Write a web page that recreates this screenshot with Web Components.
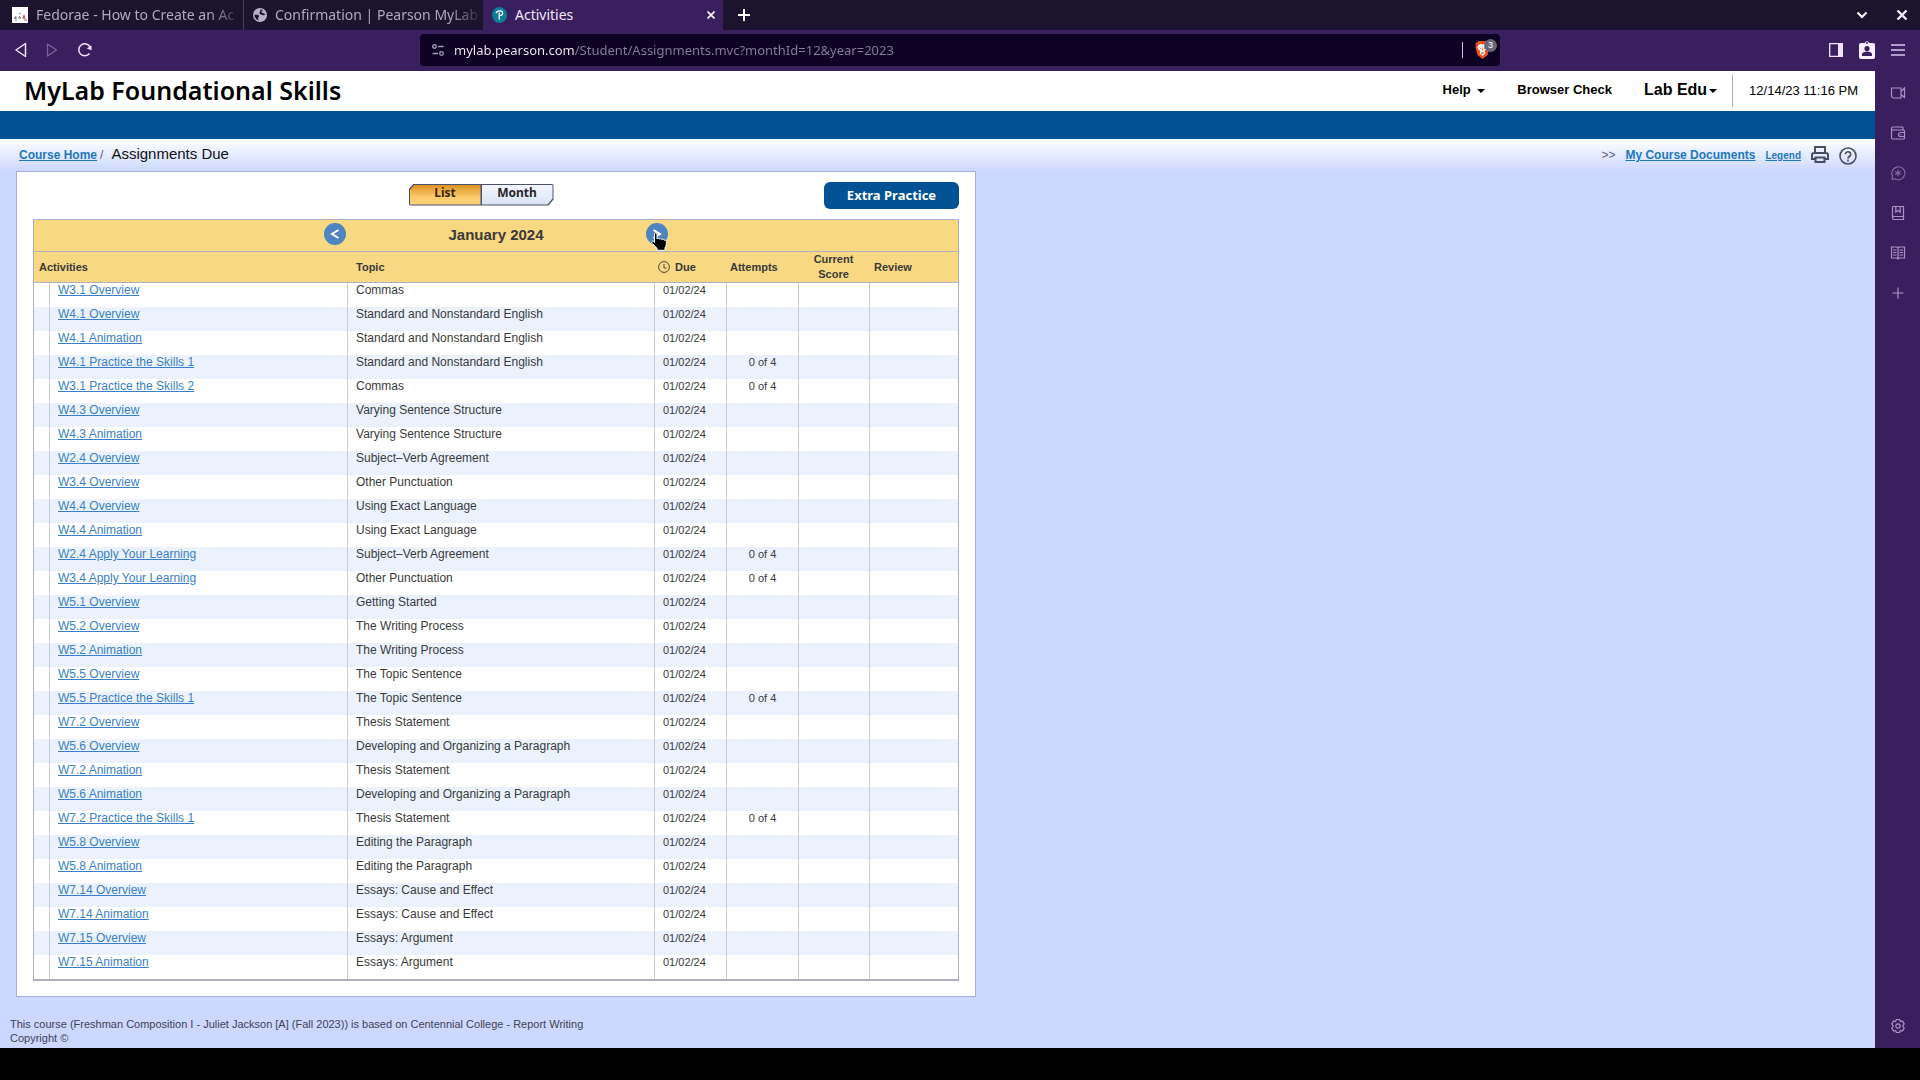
<!DOCTYPE html>
<html lang="en">
<head>
<meta charset="utf-8">
<title>Activities</title>
<style>
    :root {
        --chrome-dark: #1c142e;
        --chrome: #3a1f5e;
        --chrome-deep: #0e0224;
        --page: #ccd8ff;
        --brand: #005295;
        --gold: #f8d883;
        --line: #aeb0c0;
        --ui: "Noto Sans", "Open Sans", sans-serif;
        --text: "Liberation Sans", Arial, sans-serif;
    }
    body {
        margin: 0;
        background: #000;
        font-family: var(--text);
    }
</style>
</head>
<body>
<browser-window></browser-window>

<script>
class BrowserWindow extends HTMLElement {
    constructor() {
        super();
        this.attachShadow({ mode: 'open' });
    }

    connectedCallback() {
        this.shadowRoot.innerHTML = `
            <style>
                :host {
                    display: flex;
                    flex-direction: column;
                    box-sizing: border-box;
                    min-height: 100vh;
                    padding-bottom: 32px;
                }
                .body {
                    flex: 1;
                    display: flex;
                }
                main {
                    flex: 1;
                    min-width: 0;
                    background: var(--page);
                }
            </style>
            <tab-strip></tab-strip>
            <browser-toolbar></browser-toolbar>
            <div class="body">
                <main>
                    <lab-header></lab-header>
                    <crumb-bar>Assignments Due</crumb-bar>
                    <assignment-panel month="January 2024"></assignment-panel>
                    <course-footer>
                        <div>This course (Freshman Composition I - Juliet Jackson [A] (Fall 2023)) is based on Centennial College - Report Writing</div>
                        <div>Copyright ©</div>
                    </course-footer>
                </main>
                <side-rail></side-rail>
            </div>
        `;
    }
}

class TabStrip extends HTMLElement {
    constructor() {
        super();
        this.attachShadow({ mode: 'open' });
    }

    connectedCallback() {
        this.shadowRoot.innerHTML = `
            <style>
                :host {
                    display: flex;
                    height: 30px;
                    background: var(--chrome-dark);
                    font-family: var(--ui);
                }
                svg { display: block; flex: none; }
                button {
                    border: 0;
                    padding: 0;
                    background: none;
                    color: #fff;
                    font: inherit;
                }
                .tab {
                    display: flex;
                    align-items: center;
                    width: 240px;
                    box-sizing: border-box;
                    color: #b0a8be;
                    font-size: 14px;
                }
                .tab .label {
                    display: flex;
                    align-items: center;
                    gap: 8px;
                    flex: 1;
                    min-width: 0;
                    height: 30px;
                    padding-left: 9px;
                    color: inherit;
                }
                .tab span {
                    flex: 1;
                    padding-bottom: 2px;
                    white-space: nowrap;
                    text-align: left;
                }
                .fade span {
                    -webkit-mask-image: linear-gradient(to right, #000 84%, transparent);
                    mask-image: linear-gradient(to right, #000 84%, transparent);
                }
                .first { width: 243px; }
                .first .label { padding-left: 12px; }
                .second { border-left: 1px solid #47405a; }
                .active {
                    background: var(--chrome);
                    color: #f0eaf8;
                }
                .close { padding: 8px; }
                .new { width: 42px; display: grid; place-items: center; }
                .window {
                    display: flex;
                    align-items: center;
                    gap: 28px;
                    margin-left: auto;
                    padding-right: 12px;
                }
            </style>
            <div class="tab fade first">
                <button class="label">
                    <svg width="16" height="16" viewBox="0 0 16 16">
                        <path fill="#fff" d="M0 0h16v16H0z"/>
                        <path fill="none" stroke="#777" d="M2 11h3M3 12l1-3M6 11h3M7 9l2 2"/>
                        <path fill="none" stroke="#5a7dc0" d="M7 6l2 1M3 13h2"/>
                        <path fill="none" stroke="#cc4b4b" d="M11 12l1-4 1 4M12 13h3"/>
                    </svg>
                    <span>Fedorae - How to Create an Ac</span>
                </button>
            </div>
            <div class="tab fade second">
                <button class="label">
                    <svg width="14" height="14" viewBox="0 0 14 14">
                        <circle cx="7" cy="7" r="7" fill="#b9b1c8"/>
                        <path fill="#1c142e" d="M1.500 6.500c2 .6 4-.5 4.500 1.500.3 1.400-1.200 1.200-1 2.600.1 1 .8 1 .5 1.700C3 11.700 1.400 9.500 1.500 6.500zM7.500 1.600l2.400.5c-.2 1-.9.8-1.400 1.500-.4.600.5 1.200 1.400 1.400 1 .2 1.100 1 2.200 1-.1 1.400-1.600 1.300-2.400 1C8.800 6.600 7 6.800 6.500 5.600 6 4.300 7.600 3.500 7.500 1.600z"/>
                    </svg>
                    <span>Confirmation | Pearson MyLab</span>
                </button>
            </div>
            <div class="tab active">
                <button class="label">
                    <svg width="15" height="16" viewBox="0 0 15 16">
                        <ellipse cx="7.500" cy="8" rx="7.500" ry="8" fill="#0b7d96"/>
                        <path fill="none" stroke="#fff" stroke-width="1.300" stroke-linecap="round" d="M4.200 5.700C5 4 7 3.600 8.800 4c2.600.6 2.300 4.300-.6 4.600M7.200 6v6"/>
                    </svg>
                    <span>Activities</span>
                </button>
                <button class="close" aria-label="Close tab">
                    <svg width="8" height="8" viewBox="0 0 8 8"><path stroke="#fff" stroke-width="1.600" d="M.5.5l7 7M7.500.5l-7 7"/></svg>
                </button>
            </div>
            <button class="new" aria-label="New tab">
                <svg width="12" height="12" viewBox="0 0 12 12"><path stroke="#fff" stroke-width="2" d="M6 0v12M0 6h12"/></svg>
            </button>
            <div class="window">
                <button aria-label="Search tabs">
                    <svg width="12" height="8" viewBox="0 0 12 8"><path fill="none" stroke="#fff" stroke-width="2" d="M1.500 1.500L6 6l4.500-4.500"/></svg>
                </button>
                <button aria-label="Close window">
                    <svg width="12" height="12" viewBox="0 0 12 12"><path stroke="#f4eefc" stroke-width="2.400" d="M1.500 1.500l9 9M10.500 1.500l-9 9"/></svg>
                </button>
            </div>
        `;
    }
}

class BrowserToolbar extends HTMLElement {
    constructor() {
        super();
        this.attachShadow({ mode: 'open' });
    }

    connectedCallback() {
        this.shadowRoot.innerHTML = `
            <style>
                :host {
                    display: grid;
                    grid-template-columns: 1fr 1080px 1fr;
                    align-items: center;
                    height: 40px;
                    padding-bottom: 1px;
                    background: var(--chrome);
                    font-family: var(--ui);
                }
                svg { display: block; flex: none; }
                button {
                    border: 0;
                    padding: 0;
                    background: none;
                }
                .nav {
                    display: flex;
                    align-items: center;
                    gap: 19px;
                    padding-left: 15px;
                }
                .address {
                    display: flex;
                    align-items: center;
                    gap: 10px;
                    height: 32px;
                    box-sizing: border-box;
                    padding: 0 4px 0 12px;
                    border-radius: 4px;
                    background: var(--chrome-deep);
                }
                /* host part bright, path part dimmed */
                input {
                    flex: 1;
                    min-width: 0;
                    border: 0;
                    padding: 0;
                    outline: 0;
                    font: 13px var(--ui);
                    color: transparent;
                    background: linear-gradient(to right, #f4f0fa 121px, #877e99 121px);
                    -webkit-background-clip: text;
                    background-clip: text;
                }
                .shields {
                    display: flex;
                    position: relative;
                    padding: 0 6px 0 12px;
                    border-left: 1px solid #cbc3d8;
                    height: 16px;
                    align-items: center;
                }
                .count {
                    position: absolute;
                    right: -1px;
                    top: -3px;
                    width: 13px;
                    height: 13px;
                    border-radius: 50%;
                    background: #696678;
                    color: #fff;
                    font-size: 9px;
                    line-height: 13px;
                    text-align: center;
                }
                .tools {
                    display: flex;
                    align-items: center;
                    justify-content: flex-end;
                    gap: 16px;
                    padding-right: 15px;
                }
            </style>
            <div class="nav">
                <button aria-label="Back">
                    <svg width="12" height="16" viewBox="0 0 12 16"><path fill="none" stroke="#f1e4ff" stroke-width="1.500" stroke-linejoin="round" d="M10.500 1.500v13L1 8z"/></svg>
                </button>
                <button aria-label="Forward" disabled>
                    <svg width="12" height="16" viewBox="0 0 12 16"><path fill="none" stroke="#79609b" stroke-width="1.300" stroke-linejoin="round" d="M1.500 2v12L10.500 8z"/></svg>
                </button>
                <button aria-label="Reload">
                    <svg width="16" height="16" viewBox="0 0 16 16">
                        <path fill="none" stroke="#f1e4ff" stroke-width="1.500" d="M12.500 11.500A6 6 0 1 1 13 4.800"/>
                        <path fill="#f1e4ff" d="M9.800 6.500l4.700-3.200v5z"/>
                    </svg>
                </button>
            </div>
            <div class="address">
                <svg width="12" height="12" viewBox="0 0 12 12"><path fill="none" stroke="#a79db8" stroke-width="1.300" d="M6 2.500h5.500M.5 9.500H6"/><circle cx="2.500" cy="2.500" r="1.800" fill="none" stroke="#a79db8" stroke-width="1.300"/><circle cx="9.500" cy="9.500" r="1.800" fill="none" stroke="#a79db8" stroke-width="1.300"/></svg>
                <input type="text" aria-label="Address" value="mylab.pearson.com/Student/Assignments.mvc?monthId=12&amp;year=2023">
                <button class="shields" aria-label="Shields">
                    <svg width="15" height="18" viewBox="0 0 15 18">
                        <path fill="#ee4e24" d="M3.500 0h8l1.300 1.600L14.500 2l-.4 3 .4 1.400-2 7.500L7.500 18l-5-4.100-2-7.500L.9 5 .5 2l1.700-.4z"/>
                        <path fill="#fff" d="M5 3l2.500.6L10 3l2.600 2.600-.7 2.600L9.500 10l1 2.200-3 2.600-3-2.600 1-2.200-2.400-1.800-.7-2.600z"/>
                        <path fill="#ee4e24" d="M7.500 5l.5 4-.5 1-.5-1zM3.700 6.300l2.600.7-.4 1zM11.300 6.300L8.700 7l.4 1zM5.600 12l1.900-.9 1.900.9-1.900 1z"/>
                    </svg>
                    <span class="count">3</span>
                </button>
            </div>
            <div class="tools">
                <button aria-label="Sidebar">
                    <svg width="14" height="14" viewBox="0 0 14 14"><path fill="none" stroke="#f1e4ff" stroke-width="1.300" d="M.7.7h12.600v12.600H.7z"/><path fill="#f1e4ff" d="M9 0h5v14H9z"/></svg>
                </button>
                <button aria-label="Profile">
                    <svg width="16" height="20" viewBox="0 0 16 20">
                        <path fill="#f7efff" d="M2 3h3.800a2.300 2.300 0 0 1 4.400 0H14a2 2 0 0 1 2 2v12a2 2 0 0 1-2 2H2a2 2 0 0 1-2-2V5a2 2 0 0 1 2-2z"/>
                        <circle cx="8" cy="3" r="1" fill="#3a1f5e"/>
                        <circle cx="8" cy="8.500" r="2.600" fill="#3a1f5e"/>
                        <path fill="#3a1f5e" d="M3 16v-1.500c0-2 3-2.900 5-2.900s5 .9 5 2.900V16z"/>
                    </svg>
                </button>
                <button aria-label="Menu">
                    <svg width="14" height="12" viewBox="0 0 14 12"><path stroke="#d9c8ee" stroke-width="1.300" d="M0 1h14M0 6h14M0 11h14"/></svg>
                </button>
            </div>
        `;
    }
}

class SideRail extends HTMLElement {
    constructor() {
        super();
        this.attachShadow({ mode: 'open' });
    }

    connectedCallback() {
        this.shadowRoot.innerHTML = `
            <style>
                :host {
                    display: flex;
                    flex-direction: column;
                    width: 45px;
                    box-sizing: border-box;
                    padding: 2px 0;
                    background: var(--chrome);
                }
                button {
                    display: grid;
                    place-items: center;
                    height: 40px;
                    border: 0;
                    padding: 0;
                    background: none;
                }
                button:last-child { margin-top: auto; }
                svg {
                    display: block;
                    width: 16px;
                    height: 16px;
                    fill: none;
                    stroke: #a893c4;
                    stroke-width: 1.2;
                }
            </style>
            <button aria-label="Talk"><svg viewBox="0 0 16 16"><path d="M1.500 3h9.500v10H3.500a2 2 0 0 1-2-2zM11 6.500L14.500 3v9.500L11 9.500"/></svg></button>
            <button aria-label="Wallet"><svg viewBox="0 0 16 16"><path d="M13 4.500V3a1 1 0 0 0-1-1H3a1.500 1.500 0 0 0 0 3h10.500a1 1 0 0 1 1 1v7a1 1 0 0 1-1 1H3a1.500 1.500 0 0 1-1.500-1.500v-9M14.500 7.500h-4a2 2 0 0 0 0 4h4M10.500 9.500h1"/></svg></button>
            <button aria-label="Assistant"><svg viewBox="0 0 16 16"><path stroke="#8068a3" d="M2 14l.5-3A6.500 6.500 0 1 1 5 13.800zM8 4.800v6.400M5.200 6.400l5.600 3.200M10.800 6.400L5.200 9.600"/></svg></button>
            <button aria-label="Bookmarks"><svg viewBox="0 0 16 16"><path d="M2.500 13V2.500a1 1 0 0 1 1-1H13.500V11.500H4a1.500 1.500 0 0 0 0 3h9.500v-3M5.800 1.500v5.500L8 5.500 10.200 7V1.500"/></svg></button>
            <button aria-label="Reading list"><svg viewBox="0 0 16 16"><path d="M8 3L7 2H1.500v11H7l1 1 1-1h5.500V2H9zM8 3v11M3 5h3.500M3 7.500h3.500M3 10h3.500M9.500 5H13M9.500 7.500H13M9.500 10H13"/></svg></button>
            <button aria-label="Add"><svg viewBox="0 0 16 16"><path d="M8 2.500v11M2.500 8h11"/></svg></button>
            <button aria-label="Settings"><svg viewBox="0 0 16 16"><path d="M6.300 1.500h3.400l.6 2 2-.5 1.900 2.800L12.800 8l1.400 2.200-1.900 2.800-2-.5-.6 2H6.300l-.6-2-2 .5-1.900-2.800L3.200 8 1.800 5.800 3.700 3l2 .5z"/><circle cx="8" cy="8" r="2.200"/></svg></button>
        `;
    }
}

class LabHeader extends HTMLElement {
    constructor() {
        super();
        this.attachShadow({ mode: 'open' });
    }

    connectedCallback() {
        this.shadowRoot.innerHTML = `
            <style>
                :host {
                    display: flex;
                    align-items: center;
                    height: 40px;
                    padding: 0 17px 0 24px;
                    background: #fff;
                    border-bottom: 28px solid var(--brand);
                    color: #000;
                    font-size: 13px;
                    white-space: nowrap;
                }
                h1 {
                    margin: 0 auto 0 0;
                    padding-bottom: 2px;
                    font: 600 25px/34px var(--ui);
                }
                nav {
                    display: flex;
                    align-items: center;
                    gap: 32px;
                    padding-bottom: 2px;
                }
                button, a {
                    border: 0;
                    padding: 0;
                    background: none;
                    color: inherit;
                    font: bold 13px/20px var(--text);
                    text-decoration: none;
                }
                .user { font-size: 16px; }
                .caret {
                    display: inline-block;
                    border: 4px solid transparent;
                    border-top-color: #000;
                    border-bottom: 0;
                    vertical-align: middle;
                }
                .help .caret { margin-left: 3px; }
                .user .caret { margin-left: 2px; }
                time {
                    margin-left: 15px;
                    padding-left: 16px;
                    border-left: 1px solid #aaa;
                    line-height: 32px;
                }
            </style>
            <h1>MyLab Foundational Skills</h1>
            <nav>
                <button class="help">Help <i class="caret"></i></button>
                <a href="#check">Browser Check</a>
                <button class="user">Lab Edu<i class="caret"></i></button>
            </nav>
            <time datetime="2023-12-14T23:16">12/14/23 11:16 PM</time>
        `;
    }
}

class CrumbBar extends HTMLElement {
    constructor() {
        super();
        this.attachShadow({ mode: 'open' });
    }

    connectedCallback() {
        this.shadowRoot.innerHTML = `
            <style>
                :host {
                    display: flex;
                    align-items: baseline;
                    height: 32px;
                    box-sizing: border-box;
                    padding: 5px 18px 0 19px;
                    background: linear-gradient(#fff, var(--page));
                    color: #5a6080;
                    font-size: 12px;
                    line-height: 20px;
                    white-space: nowrap;
                }
                a {
                    color: #1d78bd;
                    font-weight: bold;
                }
                .here {
                    margin: 0 auto 0 8px;
                    color: #111;
                    font-size: 15px;
                }
                .sep { margin-left: 3px; }
                .links {
                    display: flex;
                    align-items: baseline;
                    gap: 10px;
                }
                .legend { font-size: 10px; }
                button {
                    align-self: center;
                    border: 0;
                    padding: 0;
                    background: none;
                }
                svg {
                    display: block;
                    fill: none;
                    stroke: #454d62;
                    stroke-width: 2;
                }
            </style>
            <a href="#home">Course Home</a>
            <span class="sep">/</span>
            <span class="here"><slot></slot></span>
            <div class="links">
                <span>&gt;&gt;</span>
                <a href="#documents">My Course Documents</a>
                <a class="legend" href="#legend">Legend</a>
                <button aria-label="Print">
                    <svg width="18" height="20" viewBox="0 0 18 20"><path d="M4 7V1h10v6M4 13H1V9a2 2 0 0 1 2-2h12a2 2 0 0 1 2 2v4h-3M4.500 11.500h9V16h-9z"/></svg>
                </button>
                <button aria-label="Help">
                    <svg width="18" height="18" viewBox="0 0 18 18"><circle cx="9" cy="9" r="8" stroke-width="1.600"/><path stroke-width="1.700" d="M6.300 7.200a2.700 2.500 0 1 1 4.400 2C9.600 10 9 10.200 9 11.500M9 12.600v1.800"/></svg>
                </button>
            </div>
        `;
    }
}

const TOPICS = {
    commas: 'Commas',
    standard: 'Standard and Nonstandard English',
    varying: 'Varying Sentence Structure',
    agreement: 'Subject–Verb Agreement',
    punctuation: 'Other Punctuation',
    exact: 'Using Exact Language',
    started: 'Getting Started',
    process: 'The Writing Process',
    topic: 'The Topic Sentence',
    thesis: 'Thesis Statement',
    paragraph: 'Developing and Organizing a Paragraph',
    editing: 'Editing the Paragraph',
    cause: 'Essays: Cause and Effect',
    argument: 'Essays: Argument'
};

const ROWS = [
    ['W3.1 Overview', 'commas'],
    ['W4.1 Overview', 'standard'],
    ['W4.1 Animation', 'standard'],
    ['W4.1 Practice the Skills 1', 'standard', '0 of 4'],
    ['W3.1 Practice the Skills 2', 'commas', '0 of 4'],
    ['W4.3 Overview', 'varying'],
    ['W4.3 Animation', 'varying'],
    ['W2.4 Overview', 'agreement'],
    ['W3.4 Overview', 'punctuation'],
    ['W4.4 Overview', 'exact'],
    ['W4.4 Animation', 'exact'],
    ['W2.4 Apply Your Learning', 'agreement', '0 of 4'],
    ['W3.4 Apply Your Learning', 'punctuation', '0 of 4'],
    ['W5.1 Overview', 'started'],
    ['W5.2 Overview', 'process'],
    ['W5.2 Animation', 'process'],
    ['W5.5 Overview', 'topic'],
    ['W5.5 Practice the Skills 1', 'topic', '0 of 4'],
    ['W7.2 Overview', 'thesis'],
    ['W5.6 Overview', 'paragraph'],
    ['W7.2 Animation', 'thesis'],
    ['W5.6 Animation', 'paragraph'],
    ['W7.2 Practice the Skills 1', 'thesis', '0 of 4'],
    ['W5.8 Overview', 'editing'],
    ['W5.8 Animation', 'editing'],
    ['W7.14 Overview', 'cause'],
    ['W7.14 Animation', 'cause'],
    ['W7.15 Overview', 'argument'],
    ['W7.15 Animation', 'argument']
];

class AssignmentPanel extends HTMLElement {
    constructor() {
        super();
        this.attachShadow({ mode: 'open' });
    }

    connectedCallback() {
        const month = this.getAttribute('month');
        this.shadowRoot.innerHTML = `
            <style>
                :host {
                    display: block;
                    box-sizing: border-box;
                    width: 51.2%;
                    min-width: 760px;
                    margin-left: 16px;
                    padding: 0 16px 15px;
                    background: #fff;
                    border: 1px solid #a9b2d6;
                }
                .bar {
                    display: grid;
                    grid-template-columns: 1fr auto 1fr;
                    align-items: center;
                    height: 47px;
                }
                .extra {
                    grid-column: 3;
                    justify-self: end;
                    width: 135px;
                    height: 27px;
                    border: 0;
                    padding: 0 0 2px;
                    border-radius: 6px;
                    background: var(--brand);
                    color: #fff;
                    font: bold 13px var(--ui);
                }
                view-switch {
                    grid-column: 2;
                    margin-right: 30px;
                }
                .frame {
                    border: 1px solid var(--line);
                    border-bottom-width: 2px;
                    color: #3a3a3a;
                }
                .month {
                    display: flex;
                    align-items: center;
                    justify-content: center;
                    height: 31px;
                    background: var(--gold);
                    border-bottom: 1px solid var(--line);
                }
                h2 {
                    width: 300px;
                    margin: 0;
                    padding-bottom: 2px;
                    font-size: 15px;
                    text-align: center;
                }
                .step {
                    position: relative;
                    width: 22px;
                    height: 22px;
                    margin-bottom: 4px;
                    border: 0;
                    padding: 0;
                    border-radius: 50%;
                    background: #4f84c0;
                }
                .step svg { display: block; margin: auto; }
                .step .hand {
                    position: absolute;
                    left: 5px;
                    top: 9px;
                }
                table {
                    width: 100%;
                    table-layout: fixed;
                    border-collapse: separate;
                    border-spacing: 0;
                    text-align: left;
                }
                .gutter { width: 15px; }
                .activity { width: 298px; }
                .narrow { width: 72px; }
                .score { width: 71px; }
                .review { width: 89px; }
                th {
                    height: 30px;
                    padding: 0 5px;
                    background: var(--gold);
                    border-bottom: 1px solid var(--line);
                    font-size: 11px;
                    line-height: 15px;
                }
                th.topic { padding-left: 9px; }
                th.tight { padding: 0 4px; }
                th.center { text-align: center; }
                th .due {
                    display: flex;
                    align-items: center;
                    gap: 5px;
                }
                td {
                    height: 24px;
                    padding: 0 0 0 8px;
                    border-left: 1px solid #cbccd4;
                    font-size: 12px;
                    line-height: 15px;
                    vertical-align: top;
                    white-space: nowrap;
                }
                td:first-child { border-left: 0; padding: 0; }
                td.small { font-size: 11px; }
                td.attempts {
                    padding: 0;
                    text-align: center;
                }
                tbody tr:nth-child(even) { background: #ebf2fe; }
                td a { color: #3a80c6; }
            </style>
            <div class="bar">
                <view-switch></view-switch>
                <button class="extra">Extra Practice</button>
            </div>
            <div class="frame">
                <div class="month">
                    <button class="step" aria-label="Previous month">
                        <svg width="10" height="10" viewBox="0 0 10 10"><path fill="none" stroke="#fff" stroke-width="2" d="M8.500 1L2 5l6.500 4"/></svg>
                    </button>
                    <h2>${month}</h2>
                    <button class="step" aria-label="Next month">
                        <svg width="10" height="10" viewBox="0 0 10 10"><path fill="none" stroke="#fff" stroke-width="2" d="M1.500 1L8 5 1.500 9"/></svg>
                        <svg class="hand" width="16" height="19" viewBox="0 0 16 19">
                            <path fill="#000" stroke="#fff" stroke-width="1" stroke-linejoin="round" d="M3.500 2c0-1.800 2.500-1.800 2.500 0v5c.6-1 2.200-.8 2.500.2.600-.8 2-.6 2.400.4.700-.7 2-.3 2.200.6 1.200-.5 2.300.2 2.300 1.600 0 2.700-.2 4-1.400 6v2.500H6v-2C4 14.500 3 13 1 11.200c-1.200-1.200.2-2.700 1.500-1.800l1 .9z"/>
                        </svg>
                    </button>
                </div>
                <table>
                    <colgroup>
                        <col class="gutter"><col class="activity"><col><col class="narrow"><col class="narrow"><col class="score"><col class="review">
                    </colgroup>
                    <thead>
                        <tr>
                            <th colspan="2">Activities</th>
                            <th class="topic">Topic</th>
                            <th class="tight">
                                <div class="due">
                                    <svg width="12" height="12" viewBox="0 0 12 12"><circle cx="6" cy="6" r="5.400" fill="none" stroke="#4d4636"/><path fill="none" stroke="#4d4636" d="M6 3v4h2.500"/></svg>
                                    Due
                                </div>
                            </th>
                            <th class="tight">Attempts</th>
                            <th class="tight center">Current Score</th>
                            <th>Review</th>
                        </tr>
                    </thead>
                    <tbody>
                        ${ROWS.map(([name, topic, attempts = '']) => `
                            <tr>
                                <td></td>
                                <td><a href="#activity">${name}</a></td>
                                <td>${TOPICS[topic]}</td>
                                <td class="small">01/02/24</td>
                                <td class="small attempts">${attempts}</td>
                                <td></td>
                                <td></td>
                            </tr>
                        `).join('')}
                    </tbody>
                </table>
            </div>
        `;
    }
}

class ViewSwitch extends HTMLElement {
    constructor() {
        super();
        this.attachShadow({ mode: 'open' });
    }

    connectedCallback() {
        /* dark backing shows through as a 1px outline around the clipped buttons */
        this.shadowRoot.innerHTML = `
            <style>
                :host {
                    display: flex;
                    gap: 1px;
                    padding: 1px;
                    margin-bottom: 2px;
                    border-radius: 2px;
                    background: #4b5270;
                    clip-path: polygon(0 6px, 5px 0, 100% 0, 100% calc(100% - 6px), calc(100% - 5px) 100%, 0 100%);
                }
                button {
                    width: 71px;
                    height: 20px;
                    border: 0;
                    padding: 0 0 3px;
                    background: linear-gradient(#f4f7ff, #d9e2f5);
                    color: #262626;
                    font: bold 12px/16px var(--ui);
                    clip-path: polygon(0 0, 100% 0, 100% calc(100% - 6px), calc(100% - 5px) 100%, 0 100%);
                }
                .on {
                    background: linear-gradient(#d9941f, #fdcb6c 60%, #ffd27d);
                    color: #3d2508;
                    clip-path: polygon(0 6px, 5px 0, 100% 0, 100% 100%, 0 100%);
                }
            </style>
            <button class="on" aria-pressed="true">List</button>
            <button aria-pressed="false">Month</button>
        `;
    }
}

class CourseFooter extends HTMLElement {
    constructor() {
        super();
        this.attachShadow({ mode: 'open' });
    }

    connectedCallback() {
        this.shadowRoot.innerHTML = `
            <style>
                :host {
                    display: block;
                    padding: 20px 10px 3px;
                    color: #3f4352;
                    font-size: 11px;
                    line-height: 14px;
                }
            </style>
            <footer><slot></slot></footer>
        `;
    }
}

customElements.define('tab-strip', TabStrip);
customElements.define('browser-toolbar', BrowserToolbar);
customElements.define('side-rail', SideRail);
customElements.define('lab-header', LabHeader);
customElements.define('crumb-bar', CrumbBar);
customElements.define('view-switch', ViewSwitch);
customElements.define('assignment-panel', AssignmentPanel);
customElements.define('course-footer', CourseFooter);
customElements.define('browser-window', BrowserWindow);
</script>
</body>
</html>
